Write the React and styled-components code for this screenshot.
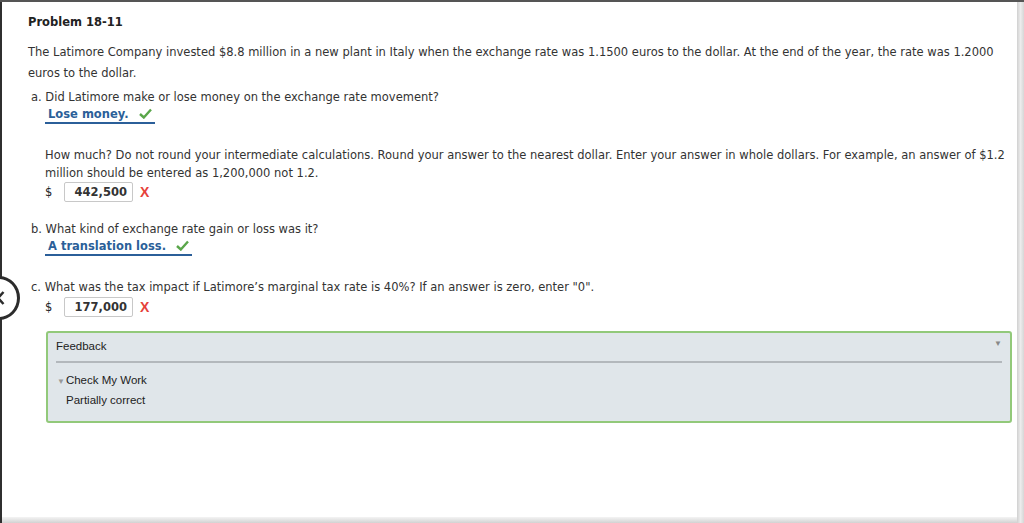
import React from 'react'
import styled, { createGlobalStyle } from 'styled-components'

const Global = createGlobalStyle`
  html, body { margin: 0; padding: 0; background: #fff; overflow: hidden; }
  body { font-family: "DejaVu Sans", Verdana, sans-serif; }
`

const Frame = styled.div`
  position: relative;
  height: 523px;
  display: flex;
  border-top: 2px solid #555;
  box-sizing: border-box;
`

const Page = styled.div`
  flex: 1;
  display: flex;
  flex-direction: column;
  border-left: 2px solid #2f2f2f;
`

const Content = styled.div`
  flex: 1;
  padding: 13px 4px 0 26px;
  color: #333;
  font-size: 11.5px;
`

const BottomEdge = styled.div`
  height: 6px;
  background: linear-gradient(#f4f4f4, #d2d2d2);
`

const Scroll = styled.div`
  width: 7px;
  background: linear-gradient(90deg, #d0d0d0, #ececec 50%, #d6d6d6);
`

const Title = styled.h1`
  margin: 0 0 13px;
  font-size: 11.5px;
  font-weight: bold;
  line-height: 14px;
  color: #222;
`

const Para = styled.p`
  margin: 0 0 4px;
  line-height: 21px;
`

const Part = styled.div`
  padding-left: 3px;
  margin-bottom: ${p => p.$gap || 0}px;
`

const Question = styled.div`
  line-height: 18px;
  padding-left: ${p => p.$indent || 0}px;
`

const Answer = styled.div`
  display: inline-flex;
  align-items: center;
  gap: 10px;
  margin-left: 14px;
  padding: 0 3px 1px;
  height: 18px;
  box-sizing: border-box;
  border-bottom: 2px solid #2b5f99;
  color: #2b5f99;
  font-weight: bold;
`

const CheckMark = () => (
  <svg width="13" height="11" viewBox="0 0 13 11">
    <path d="M1 6 L4.8 9.5 L12 1.5" fill="none" stroke="#5aa64a" strokeWidth="2.4" strokeLinejoin="miter" />
  </svg>
)

const AmountRow = styled.div`
  display: flex;
  align-items: center;
  margin: ${p => p.$top || 0}px 0 0 14px;
  height: 20px;
`

const Dollar = styled.span`
  color: #222;
  width: 19px;
`

const Box = styled.div`
  width: 69px;
  height: 20px;
  box-sizing: border-box;
  border: 1px solid #c8c8c8;
  border-radius: 2px;
  display: flex;
  align-items: center;
  justify-content: flex-end;
  padding-right: 5px;
  font-weight: bold;
  color: #333;
  background: #fff;
`

const Wrong = styled.span`
  color: #e6413a;
  font-family: "Liberation Sans", Arial, sans-serif;
  font-weight: bold;
  font-size: 14px;
  margin-left: 7px;
`

const Feedback = styled.div`
  margin: 14px 0 0 15px;
  width: 966px;
  box-sizing: border-box;
  height: 92px;
  border: 2px solid #92c97a;
  border-radius: 3px;
  background: #e0e6ea;
  padding: 0 8px;
  font-family: "Liberation Sans", Arial, sans-serif;
  font-size: 11.5px;
  color: #222;
`

const FeedHead = styled.div`
  position: relative;
  height: 28px;
  line-height: 26px;
  border-bottom: 2px solid #b3b8bc;
`

const Caret = styled.span`
  position: absolute;
  right: 0;
  top: 7px;
  font-size: 8px;
  line-height: 1;
  color: #888;
`

const Toggle = styled.div`
  margin-top: 8px;
  line-height: 18px;
  padding-left: 1px;
  span { color: #999; font-size: 8px; margin-right: 1px; }
`

const Result = styled.div`
  line-height: 19px;
  padding-left: 10px;
`

const NavCircle = styled.div`
  position: absolute;
  left: -22px;
  top: 274px;
  width: 42px;
  height: 44px;
  border: 3px solid #2c2c2c;
  border-radius: 50%;
  background: #fff;
  display: flex;
  align-items: center;
  justify-content: center;
  padding-left: 3px;
  box-sizing: border-box;
`

export default function App() {
  return (
    <>
      <Global />
      <Frame>
        <Page>
          <Content>
            <Title>Problem 18-11</Title>
            <Para>
              The Latimore Company invested $8.8 million in a new plant in Italy when the exchange rate was 1.1500 euros to the dollar. At the end of the year, the rate was 1.2000 euros to the dollar.
            </Para>
            <Part $gap={22}>
              <Question>a. Did Latimore make or lose money on the exchange rate movement?</Question>
              <Answer>Lose money.<CheckMark /></Answer>
            </Part>
            <Part $gap={18}>
              <Question $indent={14}>
                How much? Do not round your intermediate calculations. Round your answer to the nearest dollar. Enter your answer in whole dollars. For example, an answer of $1.2 million should be entered as 1,200,000 not 1.2.
              </Question>
              <AmountRow>
                <Dollar>$</Dollar>
                <Box>442,500</Box>
                <Wrong>X</Wrong>
              </AmountRow>
            </Part>
            <Part $gap={22}>
              <Question>b. What kind of exchange rate gain or loss was it?</Question>
              <Answer>A translation loss.<CheckMark /></Answer>
            </Part>
            <Part>
              <Question>c. What was the tax impact if Latimore’s marginal tax rate is 40%? If an answer is zero, enter "0".</Question>
              <AmountRow $top={1}>
                <Dollar>$</Dollar>
                <Box>177,000</Box>
                <Wrong>X</Wrong>
              </AmountRow>
              <Feedback>
                <FeedHead>Feedback<Caret>▼</Caret></FeedHead>
                <Toggle><span>▼</span>Check My Work</Toggle>
                <Result>Partially correct</Result>
              </Feedback>
            </Part>
          </Content>
          <BottomEdge />
        </Page>
        <Scroll />
        <NavCircle>
          <svg width="9" height="14" viewBox="0 0 9 14">
            <path d="M7.5 1 L2 7 L7.5 13" fill="none" stroke="#2c2c2c" strokeWidth="2.5" />
          </svg>
        </NavCircle>
      </Frame>
    </>
  )
}
